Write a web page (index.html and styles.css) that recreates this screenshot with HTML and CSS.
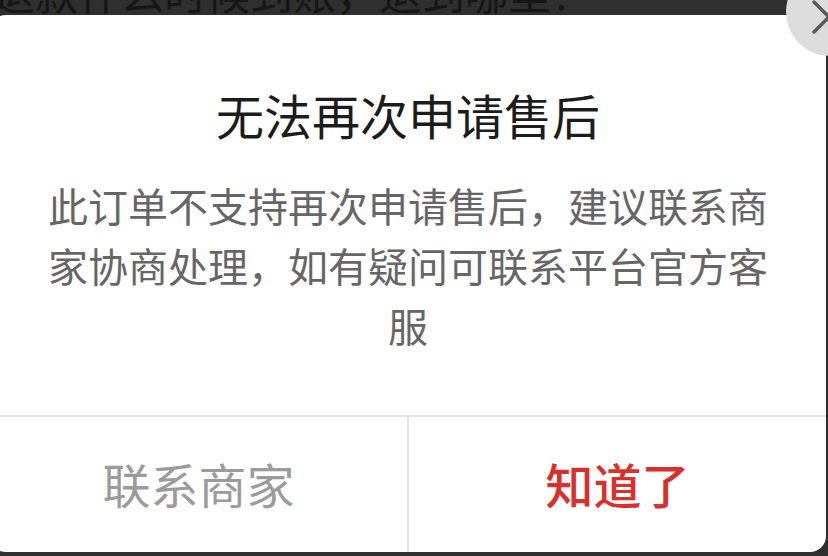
FILE: index.html
```html
<!DOCTYPE html>
<html lang="zh">
<head>
<meta charset="utf-8">
<title>无法再次申请售后</title>
<link rel="stylesheet" href="styles.css">
</head>
<body>
<div class="page">
  <div class="behind">退款什么时候到账，退到哪里？</div>
</div>
<div class="dialog">
  <div class="content">
    <h1 class="title">无法再次申请售后</h1>
    <p class="message">此订单不支持再次申请售后，建议联系商家协商处理，如有疑问可联系平台官方客服</p>
  </div>
  <div class="actions">
    <div class="btn btn-secondary">联系商家</div>
    <div class="btn btn-primary">知道了</div>
  </div>
</div>
<div class="close">
  <svg class="close-icon" width="40" height="40" viewBox="0 0 40 40">
    <path d="M5 5 L35 35 M35 5 L5 35" stroke="#5a5a5a" stroke-width="3.5" stroke-linecap="round" fill="none"/>
  </svg>
</div>
</body>
</html>
```

FILE: styles.css
```css
html, body {
  margin: 0;
  padding: 0;
  width: 828px;
  height: 556px;
  overflow: hidden;
  background: #2f2f2f;
  font-family: "Noto Sans CJK SC", "Noto Sans", sans-serif;
}

.page {
  position: relative;
  height: 556px;
}

.behind {
  margin: -30px 0 0 -8px;
  font-size: 43px;
  line-height: 43px;
  color: #161616;
  white-space: nowrap;
}

.dialog {
  position: absolute;
  left: -10px;
  top: 15px;
  width: 836px;
  height: 537px;
  background: #ffffff;
  border-radius: 16px;
  display: flex;
  flex-direction: column;
  overflow: hidden;
}

.content {
  flex: none;
  padding: 71px 48px 0;
  height: 400px;
  box-sizing: border-box;
  text-align: center;
}

.title {
  margin: 0;
  font-size: 48px;
  line-height: 56px;
  font-weight: 400;
  color: #1c1c1c;
}

.message {
  margin: 33px 0 0;
  font-size: 40px;
  line-height: 60px;
  color: #666666;
}

.actions {
  flex: 1;
  display: flex;
  border-top: 2px solid #e3e3e3;
}

.btn {
  flex: 1;
  display: flex;
  align-items: center;
  justify-content: center;
  font-size: 48px;
  padding-bottom: 4px;
}

.btn-secondary {
  color: #9b9b9b;
  border-right: 2px solid #e3e3e3;
}

.btn-primary {
  color: #d8302a;
  font-weight: 500;
}

.close {
  position: absolute;
  left: 786px;
  top: -32px;
  width: 88px;
  height: 88px;
  border-radius: 50%;
  background: #dcdcdc;
}

.close-icon {
  position: absolute;
  left: 23px;
  top: 29px;
}
```
